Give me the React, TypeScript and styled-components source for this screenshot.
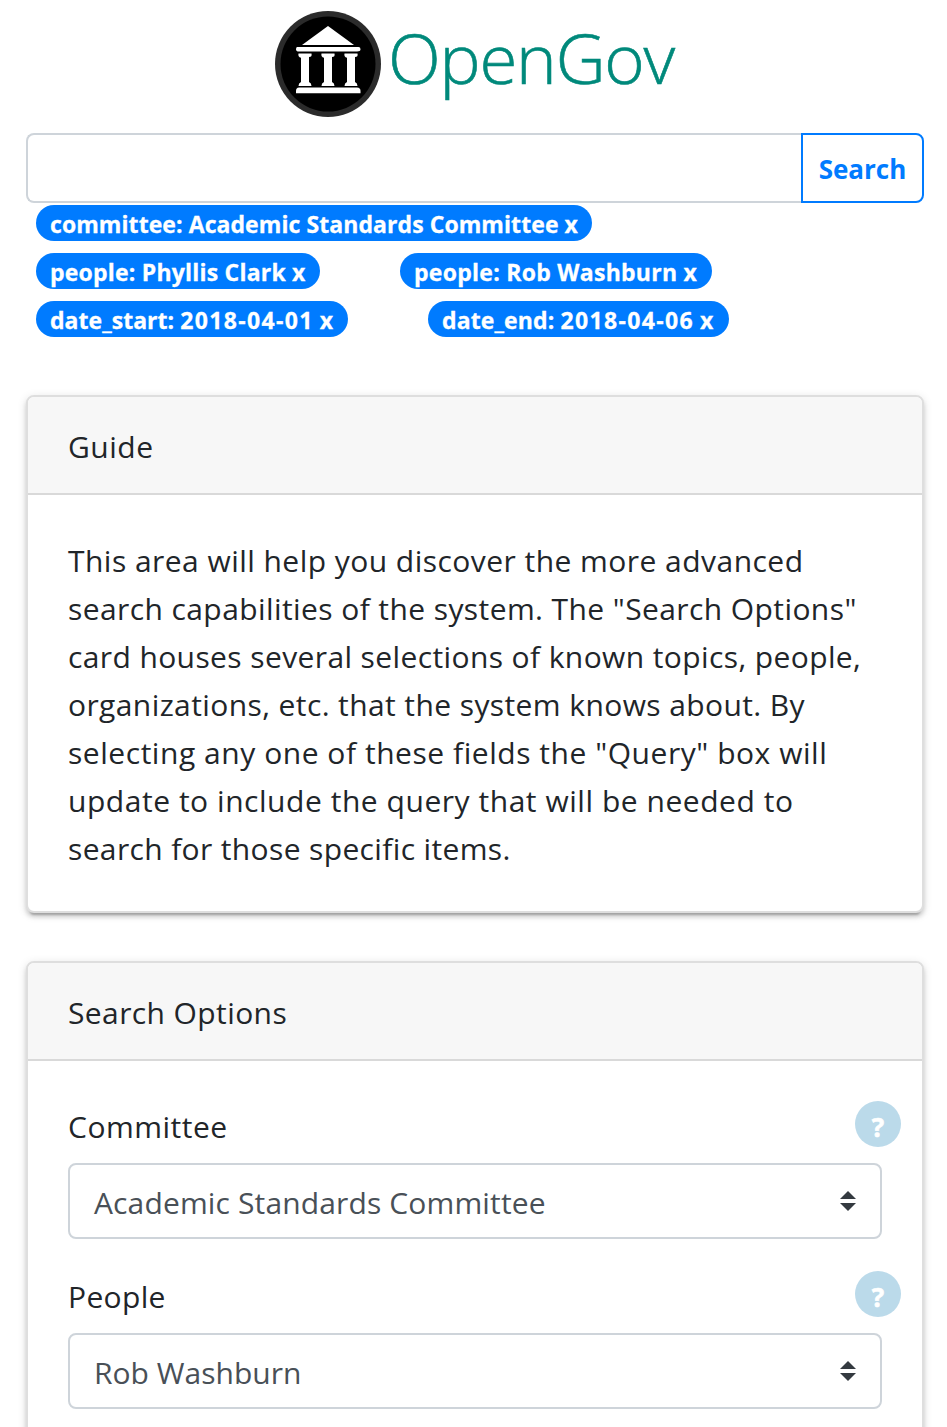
import React from "react";
import styled, { createGlobalStyle } from "styled-components";

const GlobalStyle = createGlobalStyle`
  *, *::before, *::after { box-sizing: border-box; }
  html, body { margin: 0; background: #fff; }
  body {
    font-family: "Open Sans", "Noto Sans", sans-serif;
    color: #212529;
  }
`;

const Page = styled.main`
  width: 947px;
  height: 1427px;
  padding: 11px 23px 0 26px;
  overflow: hidden;
`;

const Brand = styled.header`
  display: flex;
  height: 106px;
  margin-left: 249px;
`;

const BrandName = styled.span`
  margin: -7px 0 0 7px;
  font-size: 69px;
  font-weight: 300;
  line-height: 106px;
  letter-spacing: -1.2px;
  color: #00897b;
  -webkit-text-stroke: 0.6px #00897b;
  white-space: nowrap;
`;

const SearchBar = styled.form`
  display: flex;
  height: 70px;
  margin-top: 16px;
`;

const SearchInput = styled.input`
  flex: 1;
  min-width: 0;
  padding: 12px 24px;
  border: 2px solid #ced4da;
  border-right: 0;
  border-radius: 8px 0 0 8px;
  background: #fff;
  font: inherit;
  font-size: 30px;
  outline: none;
`;

const SearchButton = styled.button`
  width: 123px;
  padding: 2px 0 0;
  border: 2px solid #007bff;
  border-radius: 0 8px 8px 0;
  background: #fff;
  color: #007bff;
  font: inherit;
  font-size: 26px;
  font-weight: 700;
  letter-spacing: 0;
`;

const Tags = styled.div`
  display: flex;
  flex-direction: column;
  gap: 12px;
  margin: 2px 0 58px 10px;
`;

const TagRow = styled.div`
  display: flex;
  gap: 80px;
`;

const Tag = styled.button<{ $width: number; $spacing: number }>`
  width: ${(p) => p.$width}px;
  height: 36px;
  padding: 3px 0 1px 14px;
  border: 0;
  border-radius: 18px;
  background: #007bff;
  color: #fff;
  font: inherit;
  font-size: 23px;
  font-weight: 700;
  line-height: 32px;
  letter-spacing: ${(p) => p.$spacing}px;
  text-align: left;
  white-space: nowrap;
  -webkit-text-stroke: 0.3px #fff;
`;

const TagDate = styled.span`
  letter-spacing: 1.35px;
`;

const Card = styled.section`
  margin-bottom: 48px;
  border: 2px solid #dedede;
  border-radius: 8px;
  background: #fff;
  box-shadow: 0 4px 4px rgba(0, 0, 0, 0.14), 0 6px 2px -4px rgba(0, 0, 0, 0.2),
    0 2px 10px rgba(0, 0, 0, 0.12);
`;

const CardHeader = styled.h2`
  height: 98px;
  margin: 0;
  padding: 26px 40px 0;
  border-bottom: 2px solid #d9d9d9;
  border-radius: 6px 6px 0 0;
  background: #f7f7f7;
  font-size: 30px;
  font-weight: 400;
  line-height: 48px;
`;

const CardBody = styled.div`
  padding: 40px;
`;

const GuideText = styled.p`
  margin: 2px 0 -2px;
  font-size: 30px;
  line-height: 48px;
`;

const Line = styled.span<{ $spacing: number }>`
  display: block;
  letter-spacing: ${(p) => p.$spacing}px;
  white-space: nowrap;
`;

const Field = styled.div`
  margin-bottom: 32px;
`;

const FieldTop = styled.div`
  display: flex;
  justify-content: space-between;
  height: 64px;
  margin-right: -19px;
  font-size: 30px;
  line-height: 52px;
`;

const Help = styled.button`
  width: 46px;
  height: 46px;
  padding: 6px 0 0;
  border: 0;
  border-radius: 50%;
  background: #bbdaea;
  color: #fff;
  font: inherit;
  font-size: 26px;
  font-weight: 700;
  line-height: 40px;
  -webkit-text-stroke: 0.6px #fff;
`;

const Select = styled.div`
  display: flex;
  align-items: center;
  justify-content: space-between;
  width: 814px;
  height: 76px;
  margin-top: -2px;
  padding: 0 24px;
  border: 2px solid #ced4da;
  border-radius: 8px;
  color: #495057;
  font-size: 30px;
`;

const SelectValue = styled.span`
  padding-top: 2px;
`;

const columns = [30, 53, 76];

const Logo = () => (
  <svg width="106" height="106" viewBox="0 0 106 106" aria-hidden="true">
    <circle cx="53" cy="53" r="53" fill="#2b2b2b" />
    <circle cx="53" cy="53" r="47.5" fill="#000" />
    <g fill="#fff">
      <path d="M53 15 79 34H27Z" />
      <path d="M22.5 36h61q2 0 2 2.2T82 40.5H24q-3 0-3-2.3t1.5-2.2Z" />
      {columns.map((c) => (
        <path
          key={c}
          d={`M${c - 6.5} 42.5h13q.8 3.5-2.5 3.500v.8H${c + 4}V71q2.500 1 2.500 4h-13q0-3 2.500-4V46.800H${c - 4}q-3.300-.8-2.500-4.300Z`}
        />
      ))}
      <path d="M24 76.500h58q3.500 0 3.500 3.500v2.300h-64.500V80q0-3.500 3-3.500Z" />
    </g>
  </svg>
);

const Caret = () => (
  <svg width="16" height="20" viewBox="0 0 4 5" aria-hidden="true">
    <path fill="#343a40" d="M2 0 0 2h4zm0 5L0 3h4z" />
  </svg>
);

type FieldProps = {
  label: string;
  labelSpacing: number;
  value: string;
  valueSpacing: number;
};

const SelectField = ({ label, labelSpacing, value, valueSpacing }: FieldProps) => (
  <Field>
    <FieldTop>
      <Line $spacing={labelSpacing}>{label}</Line>
      <Help type="button" aria-label={`${label} help`}>?</Help>
    </FieldTop>
    <Select role="combobox" aria-label={label}>
      <SelectValue><Line $spacing={valueSpacing}>{value}</Line></SelectValue>
      <Caret />
    </Select>
  </Field>
);

type TagData = { text: string; date?: string; width: number; spacing: number };

const tagRows: TagData[][] = [
  [{ text: "committee: Academic Standards Committee", width: 556, spacing: 0.07 }],
  [
    { text: "people: Phyllis Clark", width: 284, spacing: 0.21 },
    { text: "people: Rob Washburn", width: 312, spacing: 0.27 },
  ],
  [
    { text: "date_start: ", date: "2018-04-01", width: 312, spacing: 0.04 },
    { text: "date_end: ", date: "2018-04-06", width: 301, spacing: 0.12 },
  ],
];

const guide = [
  { text: "This area will help you discover the more advanced", spacing: 0.46 },
  { text: "search capabilities of the system. The \"Search Options\"", spacing: 0.41 },
  { text: "card houses several selections of known topics, people,", spacing: 0.39 },
  { text: "organizations, etc. that the system knows about. By", spacing: 0.4 },
  { text: "selecting any one of these fields the \"Query\" box will", spacing: 0.54 },
  { text: "update to include the query that will be needed to", spacing: 0.54 },
  { text: "search for those specific items.", spacing: 0.36 },
];

export default function App() {
  return (
    <>
      <GlobalStyle />
      <Page>
        <Brand>
          <Logo />
          <BrandName>OpenGov</BrandName>
        </Brand>
        <SearchBar>
          <SearchInput aria-label="Query" />
          <SearchButton type="button">Search</SearchButton>
        </SearchBar>
        <Tags>
          {tagRows.map((row, i) => (
            <TagRow key={i}>
              {row.map((tag) => (
                <Tag key={tag.text} type="button" $width={tag.width} $spacing={tag.spacing}>
                  {tag.text}
                  {tag.date && <TagDate>{tag.date}</TagDate>}
                  {" x"}
                </Tag>
              ))}
            </TagRow>
          ))}
        </Tags>
        <Card>
          <CardHeader><Line $spacing={0.5}>Guide</Line></CardHeader>
          <CardBody>
            <GuideText>
              {guide.map((line) => (
                <Line key={line.text} $spacing={line.spacing}>{line.text}</Line>
              ))}
            </GuideText>
          </CardBody>
        </Card>
        <Card>
          <CardHeader><Line $spacing={0.4}>Search Options</Line></CardHeader>
          <CardBody>
            <SelectField label="Committee" labelSpacing={0.5} value="Academic Standards Committee" valueSpacing={0.14} />
            <SelectField label="People" labelSpacing={0.35} value="Rob Washburn" valueSpacing={0.02} />
          </CardBody>
        </Card>
      </Page>
    </>
  );
}
